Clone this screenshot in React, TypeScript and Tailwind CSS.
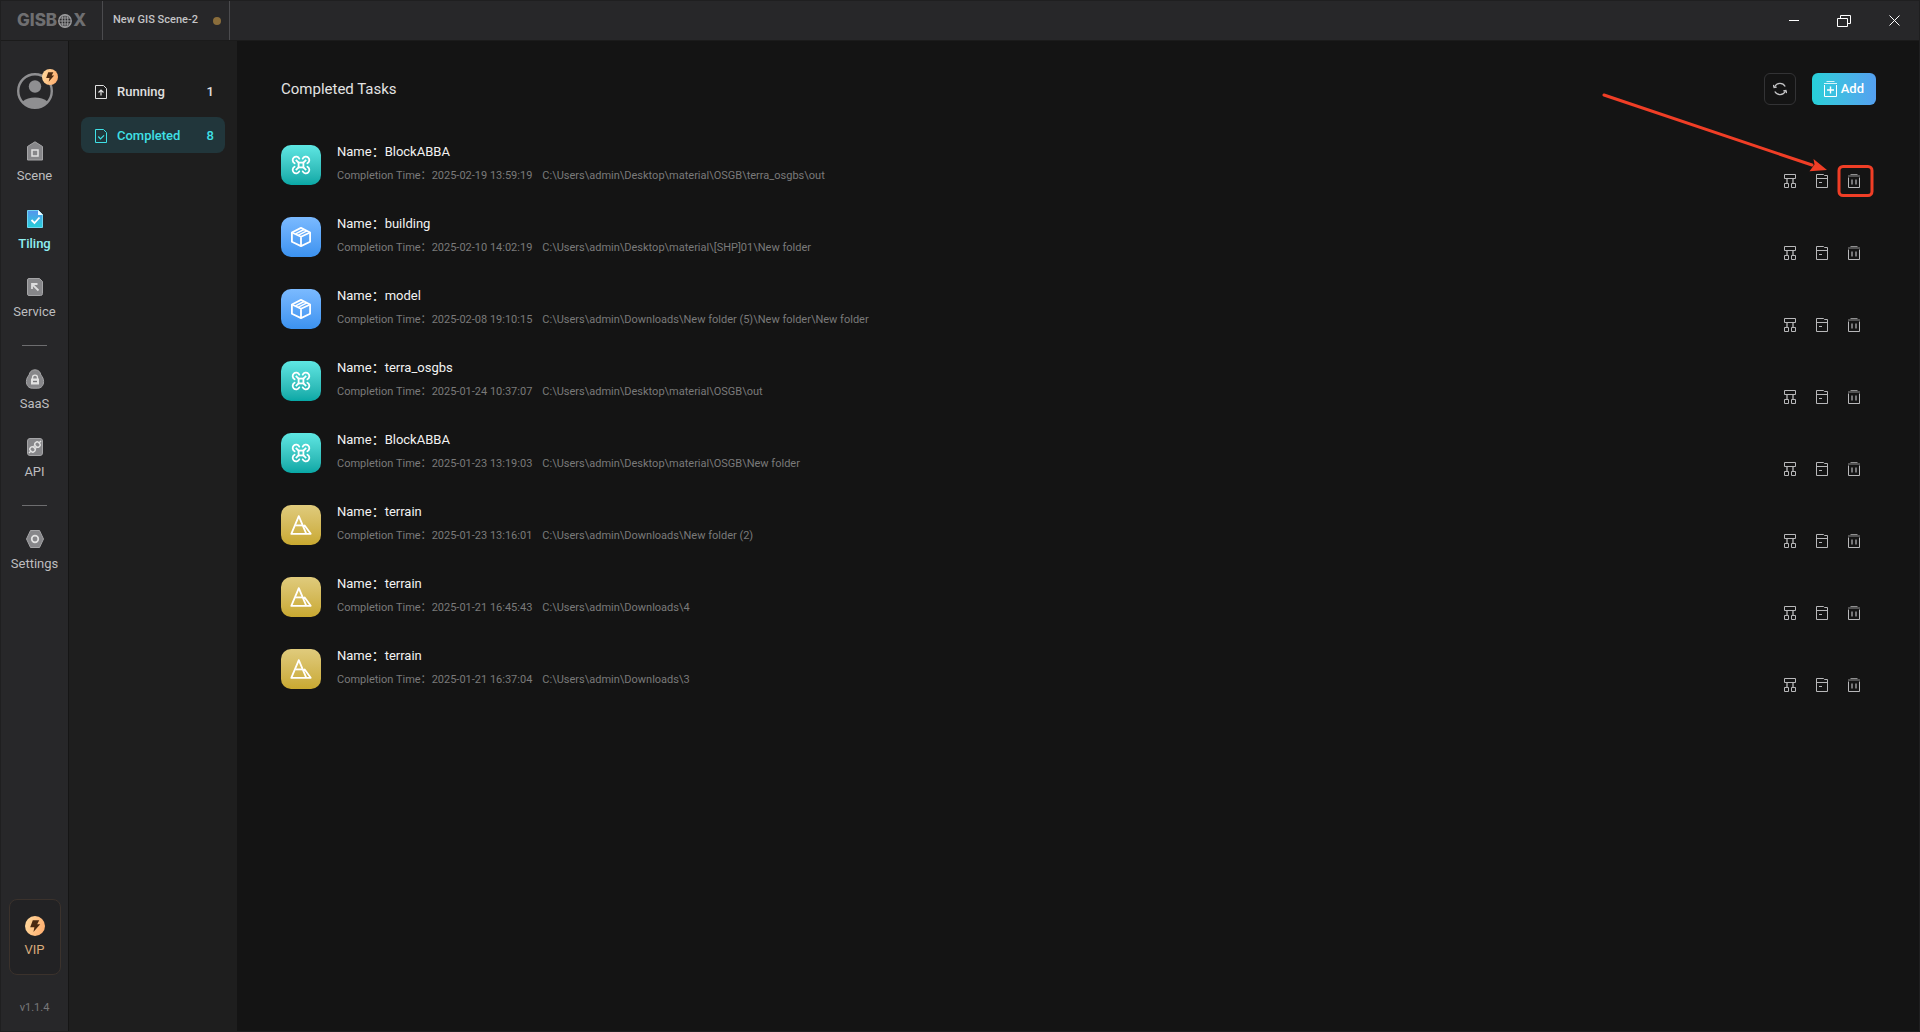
import type { ReactNode } from "react";

type TaskType = "osgb" | "model" | "terrain";

type Task = {
  type: TaskType;
  name: string;
  time: string;
  path: string;
};

const tasks: Task[] = [
  { type: "osgb", name: "BlockABBA", time: "2025-02-19 13:59:19", path: "C:\\Users\\admin\\Desktop\\material\\OSGB\\terra_osgbs\\out" },
  { type: "model", name: "building", time: "2025-02-10 14:02:19", path: "C:\\Users\\admin\\Desktop\\material\\[SHP]01\\New folder" },
  { type: "model", name: "model", time: "2025-02-08 19:10:15", path: "C:\\Users\\admin\\Downloads\\New folder (5)\\New folder\\New folder" },
  { type: "osgb", name: "terra_osgbs", time: "2025-01-24 10:37:07", path: "C:\\Users\\admin\\Desktop\\material\\OSGB\\out" },
  { type: "osgb", name: "BlockABBA", time: "2025-01-23 13:19:03", path: "C:\\Users\\admin\\Desktop\\material\\OSGB\\New folder" },
  { type: "terrain", name: "terrain", time: "2025-01-23 13:16:01", path: "C:\\Users\\admin\\Downloads\\New folder (2)" },
  { type: "terrain", name: "terrain", time: "2025-01-21 16:45:43", path: "C:\\Users\\admin\\Downloads\\4" },
  { type: "terrain", name: "terrain", time: "2025-01-21 16:37:04", path: "C:\\Users\\admin\\Downloads\\3" },
];

const tileColors: Record<TaskType, string> = {
  osgb: "bg-linear-to-b from-[#5ee7e3] to-[#06a8a6]",
  model: "bg-linear-to-b from-[#7bbaff] to-[#3b92f0]",
  terrain: "bg-linear-to-b from-[#e0cb7c] to-[#c9a92f]",
};

/* ---------- icons ---------- */

function Bolt({ size }: { size: number }) {
  return (
    <svg width={size} height={size} viewBox="0 0 20 20">
      <defs>
        <linearGradient id="gold" x1="0" y1="0" x2="1" y2="0.3">
          <stop offset="0" stopColor="#ffdba0" />
          <stop offset="1" stopColor="#ffb273" />
        </linearGradient>
      </defs>
      <circle cx="10" cy="10" r="10" fill="url(#gold)" />
      <path d="M7.8 4.2h6.4l-2 4h3L8.4 16l1-4.8H5.2z" fill="#4a2a12" />
    </svg>
  );
}

function Avatar() {
  return (
    <svg width="36" height="36" viewBox="0 0 36 36">
      <defs>
        <clipPath id="face">
          <circle cx="18" cy="18" r="17" />
        </clipPath>
      </defs>
      <circle cx="18" cy="13.5" r="6.2" fill="#8f8f91" />
      <path d="M5 29c4-3.5 8-4.5 13-4.5s9 1 13 4.5l-5 7H10z" fill="#8f8f91" clipPath="url(#face)" />
      <circle cx="18" cy="18" r="16.8" fill="none" stroke="#8f8f91" strokeWidth="2.4" />
    </svg>
  );
}

const SceneIcon = () => (
  <svg width="20" height="20" viewBox="0 0 20 20">
    <path d="M10 .8l7.5 4.7v13.5h-15V5.5z" fill="#87878a" stroke="#a5a5a7" />
    <rect x="7" y="9" width="6" height="6" fill="none" stroke="#e2e2e2" strokeWidth="1.5" />
  </svg>
);

const TilingIcon = () => (
  <svg width="20" height="20" viewBox="0 0 20 20">
    <defs>
      <linearGradient id="tiling" x1="0" y1="0" x2="0" y2="1">
        <stop offset="0" stopColor="#5794ee" />
        <stop offset="1" stopColor="#25d0d8" />
      </linearGradient>
    </defs>
    <path d="M2.5 1.5h11l4 4v13h-15z" fill="url(#tiling)" stroke="#6fd5f0" />
    <path d="M13 1v5h5z" fill="#eefcff" />
    <path d="M6.5 11l3 3 5-5.5" fill="none" stroke="#fff" strokeWidth="1.8" />
  </svg>
);

const ServiceIcon = () => (
  <svg width="20" height="20" viewBox="0 0 20 20">
    <path d="M4 1.5h10.5l3 3v12a2 2 0 0 1-2 2H4a1.5 1.5 0 0 1-1.5-1.5V3A1.5 1.5 0 0 1 4 1.5z" fill="#87878a" stroke="#a5a5a7" />
    <path d="M7 12V7h5.5M7.3 7.3l6.2 6.2" fill="none" stroke="#dededf" strokeWidth="1.8" />
  </svg>
);

const SaasIcon = () => (
  <svg width="20" height="20" viewBox="0 0 20 20">
    <path d="M10 .8c3.4 0 5.4 2.2 5.9 5.2 1.6 1.9 2.7 4 2.7 6.5 0 4.2-2.5 6.7-5.8 6.7H7.2c-3.3 0-5.8-2.5-5.8-6.7 0-2.500 1.100-4.600 2.700-6.500C4.600 3 6.600.8 10 .8z" fill="#87878a" stroke="#a5a5a7" />
    <path d="M7.5 10V8.700a2.500 2.500 0 0 1 5 0V10" fill="none" stroke="#e2e2e2" strokeWidth="1.3" />
    <rect x="6" y="9.5" width="8" height="6" fill="#e2e2e2" />
    <path d="M8 12.500h4" stroke="#77777a" strokeWidth="1.4" />
  </svg>
);

const ApiIcon = () => (
  <svg width="20" height="20" viewBox="0 0 20 20">
    <rect x="2.5" y="1.5" width="15" height="17" rx="2.5" fill="#87878a" stroke="#a5a5a7" />
    <g transform="rotate(-45 10 10)" fill="none" stroke="#e2e2e2" strokeWidth="1.4">
      <path d="M1.500 10h2.500M16 10h2.500M9 8.800h2M9 11.200h2" />
      <rect x="4.2" y="7.3" width="4.6" height="5.4" rx="2" />
      <rect x="11.200" y="7.3" width="4.6" height="5.4" rx="2" />
    </g>
  </svg>
);

const SettingsIcon = () => (
  <svg width="20" height="20" viewBox="0 0 20 20">
    <path d="M5.5 1.5h9l4 8.5-4 8.5h-9l-4-8.5z" fill="#87878a" stroke="#a5a5a7" strokeLinejoin="round" />
    <circle cx="10" cy="10" r="3.3" fill="none" stroke="#e2e2e2" strokeWidth="1.7" />
  </svg>
);

const RunningIcon = () => (
  <svg width="12" height="14" viewBox="0 0 12 14" fill="none" stroke="currentColor">
    <path d="M.5.5h8l3 3v10H.5z" />
    <path d="M6 10.5V5.5M3.5 7.500L6 5l2.500 2.500" strokeWidth="1.2" />
  </svg>
);

const CompletedIcon = () => (
  <svg width="12" height="14" viewBox="0 0 12 14" fill="none" stroke="currentColor">
    <path d="M.5.5h8l3 3v10H.5z" />
    <path d="M3.300 7.500l2.200 2.300L9 6.300" strokeWidth="1.2" />
  </svg>
);

const taskIcons: Record<TaskType, ReactNode> = {
  osgb: (
    <svg width="20" height="20" viewBox="0 0 20 20" fill="none" stroke="#fff" strokeWidth="1.8">
      <rect x="7.6" y="7.6" width="4.8" height="4.8" />
      <path d="M7.6 7.6L4.8 4.8M12.4 7.6l2.8-2.8M7.6 12.4l-2.8 2.8M12.4 12.4l2.8 2.8" />
      <path d="M3.6 8.3A3.5 3.5 0 1 1 8.3 3.6M11.7 3.6a3.5 3.5 0 1 1 4.7 4.7M3.6 11.7a3.5 3.5 0 1 0 4.7 4.7M11.7 16.4a3.5 3.5 0 1 0 4.7-4.7" strokeLinecap="round" />
    </svg>
  ),
  model: (
    <svg width="20" height="20" viewBox="0 0 20 20" fill="none" stroke="#fff" strokeWidth="1.8" strokeLinejoin="round">
      <path d="M10 .9l9.1 4.6v9.2L10 19.1.9 14.7V5.5z" />
      <path d="M.9 5.5L10 9.7l9.1-4.2M10 9.7v9.4" />
      <path d="M4.6 6.9l8.4-4.4M7.400 8.200l8.400-4.300" strokeWidth="1.5" />
    </svg>
  ),
  terrain: (
    <svg width="22" height="20" viewBox="0 0 22 20" fill="none" stroke="#fff" strokeWidth="1.8" strokeLinejoin="round">
      <path d="M16.3 18.8L8.8 1.2 1.3 18.8h19.400l-6-8.300-1.500 1.200" />
      <path d="M5.3 10.4h7" />
    </svg>
  ),
};

const TreeIcon = () => (
  <svg width="12" height="14" viewBox="0 0 12 14" fill="none" stroke="currentColor">
    <path d="M.5.5h11v4H.5zM.5 9.500h4v4h-4zM7.500 9.500h4v4h-4z" />
    <path d="M3 4.500v5M9 4.500v5" strokeWidth="2" opacity=".65" />
  </svg>
);

const FolderIcon = () => (
  <svg width="12" height="14" viewBox="0 0 12 14" fill="none" stroke="currentColor">
    <path d="M.5.5h7l1 1h3v12H.5zM.5 4.500h11" />
    <path d="M3 8.500h3" />
  </svg>
);

const TrashIcon = () => (
  <svg width="12" height="14" viewBox="0 0 12 14" fill="none" stroke="currentColor">
    <path d="M.5 3.500v10h11v-10" />
    <path d="M0 2h12M2.500 .500h7" opacity=".75" />
    <path d="M4 5.500v5M8 5.500v5" strokeWidth="2" opacity=".6" />
  </svg>
);

const AddIcon = () => (
  <svg width="13" height="16" viewBox="0 0 13 16" fill="none" stroke="#fff">
    <path d="M.5 4v11.500h12V4" />
    <path d="M0 2.500h13M2.500 .500h8" opacity=".8" />
    <path d="M6.500 5.500v7M3 9h7" strokeWidth="1.4" />
  </svg>
);

const RefreshIcon = () => (
  <svg width="14" height="14" viewBox="0 0 14 14" fill="none" stroke="currentColor" strokeWidth="1.3">
    <path d="M1.600 4.800A6 6 0 0 1 12.200 4.500M12.400 9.200A6 6 0 0 1 1.800 9.500" />
    <path d="M.3 3l.8 2.500 2.600-.4M13.700 11l-.8-2.500-2.600.4" />
  </svg>
);

const Globe = () => (
  <svg width="14" height="14" viewBox="0 0 13 13" fill="none" stroke="currentColor">
    <circle cx="6.5" cy="6.5" r="5.8" strokeWidth="1.3" />
    <ellipse cx="6.5" cy="6.5" rx="2.7" ry="5.8" />
    <path d="M6.5.7v11.600M.7 6.500h11.600M1.500 3.700h10M1.500 9.300h10" />
  </svg>
);

/* ---------- parts ---------- */

function NavItem({ label, icon, active }: { label: string; icon: ReactNode; active?: boolean }) {
  return (
    <button className={`flex w-full flex-col items-center gap-[5px] text-[13px] leading-5 ${active ? "font-medium text-[#8ff0f2]" : "text-[#bdbdbf]"}`}>
      {icon}
      {label}
    </button>
  );
}

function TitleBar() {
  return (
    <header className="flex h-10 shrink-0 items-center border-b border-[#1b1b1b] bg-[#272729]">
      <div className="flex w-[101px] items-center gap-px pl-4 font-[Inter] text-[17px] font-extrabold text-[#6f6f71]">
        <span>GISB</span>
        <span className="text-[#9a9a9c]"><Globe /></span>
        <span>X</span>
      </div>
      <div className="flex h-full w-32 items-center justify-between border-x border-[#4b4b4e] pl-2.5 pr-2 text-[11px] font-medium text-[#c4c4c6]">
        New GIS Scene-2
        <span className="size-2 rounded-full bg-[#8a6d3b]" />
      </div>
      <div className="ml-auto flex h-full text-white">
        <button aria-label="Minimize" className="flex w-[50px] items-center justify-center">
          <span className="h-px w-2.5 bg-white" />
        </button>
        <button aria-label="Restore" className="flex w-[50px] items-center justify-center">
          <svg width="14" height="12" viewBox="0 0 14 12" fill="none" stroke="currentColor">
            <path d="M.5 3.500h10v8H.5zM3.500 3.500v-3h10v8h-3" />
          </svg>
        </button>
        <button aria-label="Close" className="flex w-[50px] items-center justify-center">
          <svg width="11" height="11" viewBox="0 0 11 11" fill="none" stroke="currentColor">
            <path d="M.5.5l10 10M10.500.5l-10 10" />
          </svg>
        </button>
      </div>
    </header>
  );
}

function Sidebar() {
  return (
    <nav className="flex w-[68px] shrink-0 flex-col items-center border-r border-[#151515] bg-[#272729] pt-8">
      <button aria-label="Account" className="relative mb-8">
        <Avatar />
        <span className="absolute -right-[5px] -top-1"><Bolt size={16} /></span>
      </button>
      <div className="flex w-full flex-col items-center gap-[23px]">
        <NavItem label="Scene" icon={<SceneIcon />} />
        <NavItem label="Tiling" icon={<TilingIcon />} active />
        <NavItem label="Service" icon={<ServiceIcon />} />
        <hr className="w-[25px] border-[#6d6d6f]" />
        <NavItem label="SaaS" icon={<SaasIcon />} />
        <NavItem label="API" icon={<ApiIcon />} />
        <hr className="w-[25px] border-[#6d6d6f]" />
        <NavItem label="Settings" icon={<SettingsIcon />} />
      </div>
      <button className="mt-auto flex h-[76px] w-[52px] flex-col items-center justify-center gap-1 rounded-lg border border-[#3b322c] bg-[#222224] pt-0.5 text-[13px] leading-5 text-[#d8ab7c]">
        <Bolt size={20} />
        VIP
      </button>
      <p className="pb-[15px] pt-[25px] text-[11px] leading-4 text-[#77777a]">v1.1.4</p>
    </nav>
  );
}

function TaskFilter({ label, count, icon, active }: { label: string; count: number; icon: ReactNode; active?: boolean }) {
  return (
    <button className={`flex h-9 items-center rounded-lg pl-3.5 pr-[11px] pt-px text-[13px] font-medium ${active ? "bg-[#21363b] text-[#3fe0e6]" : "text-[#e0e0e0]"}`}>
      {icon}
      <span className="ml-2.5">{label}</span>
      <span className="ml-auto">{count}</span>
    </button>
  );
}

function ActionButton({ label, children }: { label: string; children: ReactNode }) {
  return (
    <button aria-label={label} className="relative flex h-6 w-5 items-center justify-center">
      {children}
    </button>
  );
}

// Red arrow and frame pointing at the delete button
function DeleteHint() {
  return (
    <svg className="pointer-events-none absolute -right-2.5 -top-20 max-w-none" width="275" height="110" viewBox="0 0 275 110">
      <path d="M5 6l208 70" stroke="#f03e26" strokeWidth="3" strokeLinecap="round" />
      <path d="M228 81l-13.500-11 1 5.500-5 6.800z" fill="#f03e26" />
      <rect x="240" y="77.5" width="33" height="29" rx="4" fill="none" stroke="#f03e26" strokeWidth="3" />
    </svg>
  );
}

function TaskRow({ task, hint }: { task: Task; hint: boolean }) {
  return (
    <li className="flex h-12">
      <div className={`flex size-10 items-center justify-center rounded-[10px] ${tileColors[task.type]}`}>
        {taskIcons[task.type]}
      </div>
      <div className="ml-4 -mt-[3px]">
        <p className="text-[13px] leading-5 text-[#f2f2f2]">Name：{task.name}</p>
        <p className="mt-1 flex gap-2.5 text-[11px] leading-5 text-[#7a7a7a]">
          <span>Completion Time：{task.time}</span>
          <span>{task.path}</span>
        </p>
      </div>
      <div className="ml-auto flex items-end gap-3 pr-3 text-[#b8b8ba]">
        <ActionButton label="Show structure"><TreeIcon /></ActionButton>
        <ActionButton label="Open folder"><FolderIcon /></ActionButton>
        <ActionButton label="Delete">
          <TrashIcon />
          {hint && <DeleteHint />}
        </ActionButton>
      </div>
    </li>
  );
}

export default function App() {
  return (
    <div className="flex min-h-screen flex-col border border-[#1f1f20] bg-[#141414] font-[Roboto,'Noto_Sans_CJK_SC',sans-serif]">
      <TitleBar />
      <div className="flex flex-1">
        <Sidebar />
        <aside className="flex w-[168px] shrink-0 flex-col gap-2 bg-[#1e1e1e] px-3 pt-8">
          <TaskFilter label="Running" count={1} icon={<RunningIcon />} />
          <TaskFilter label="Completed" count={8} icon={<CompletedIcon />} active />
        </aside>
        <main className="min-w-0 flex-1 pl-11 pr-[43px] pt-8">
          <div className="flex items-center gap-4">
            <h1 className="mr-auto text-[15px] leading-8 text-[#e3e3e3]">Completed Tasks</h1>
            <button aria-label="Refresh" className="flex size-8 items-center justify-center rounded-md border border-[#333335] text-[#c4c4c6]">
              <RefreshIcon />
            </button>
            <button className="flex h-8 items-center gap-1 rounded-md bg-linear-to-r from-[#25d0d8] to-[#54a0f0] px-3 text-[13px] font-medium text-white">
              <AddIcon />
              Add
            </button>
          </div>
          <ul className="flex flex-col gap-6 pt-10">
            {tasks.map((task, i) => (
              <TaskRow key={i} task={task} hint={i === 0} />
            ))}
          </ul>
        </main>
      </div>
    </div>
  );
}
